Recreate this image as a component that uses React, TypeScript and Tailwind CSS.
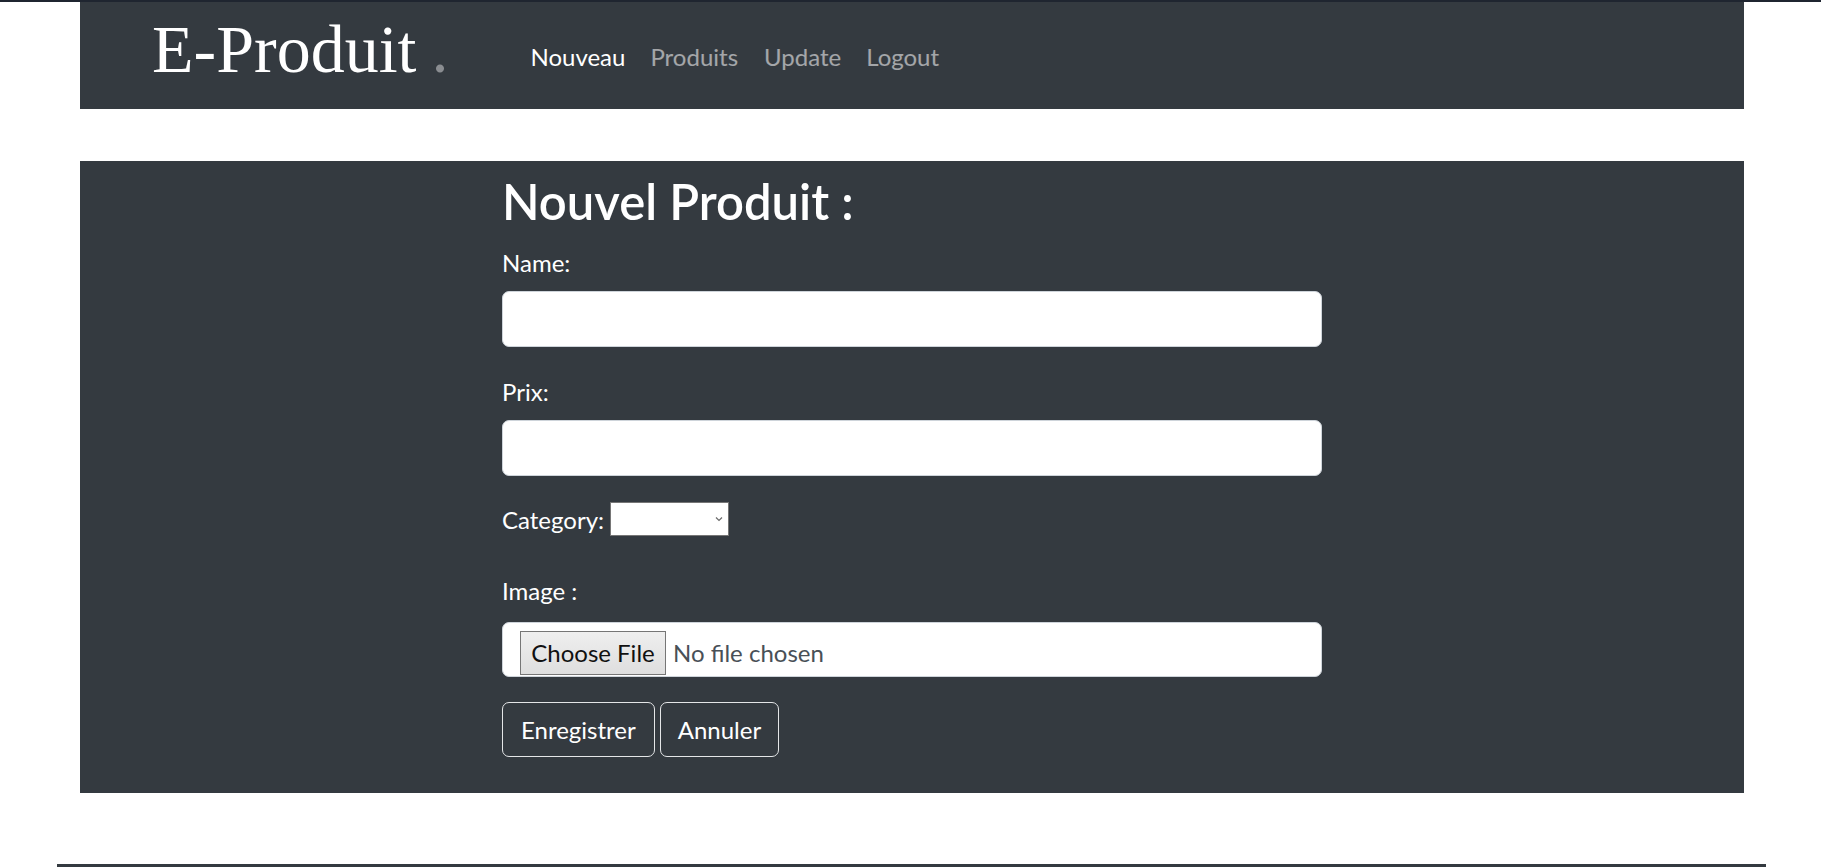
export default function App() {
  return (
    <div className="min-h-screen bg-white border-t-2 border-[#1f2530] font-['Lato',sans-serif]">
      <nav className="ml-[80px] w-[1664px] h-[107px] bg-[#343a40] flex items-start">
        <a href="#" className="ml-[72px] mt-[13px] font-['Liberation_Serif',serif] text-[68px] leading-none text-white whitespace-nowrap">
          E-Produit<span className="ml-[15px] text-[#8a8d91]">.</span>
        </a>
        <ul className="flex ml-[70px] mt-[37px] text-[24px] leading-[36px]">
          <li><a href="#" className="px-[12px] text-white">Nouveau</a></li>
          <li><a href="#" className="px-[13px] text-white/55">Produits</a></li>
          <li><a href="#" className="px-[13px] text-white/55">Update</a></li>
          <li><a href="#" className="px-[12px] text-white/55">Logout</a></li>
        </ul>
      </nav>

      <main className="ml-[80px] w-[1664px] mt-[52px] bg-[#343a40] pt-[10px] pb-[36px]">
        <form className="mx-auto w-[820px] text-white text-[24px] leading-[36px]">
          <h1 className="text-[49px] leading-[61px] font-semibold">Nouvel Produit :</h1>

          <label className="block mt-[13px]">Name:</label>
          <input type="text" className="mt-[10px] block w-full h-[56px] bg-white rounded-[7px] border border-[#ced4da] px-4 text-[#212529]" />

          <label className="block mt-[27px]">Prix:</label>
          <input type="text" className="mt-[10px] block w-full h-[56px] bg-white rounded-[7px] border border-[#ced4da] px-4 text-[#212529]" />

          <div className="mt-[26px] flex items-start gap-[6px]">
            <label>Category:</label>
            <div className="relative">
              <select className="appearance-none block w-[119px] h-[34px] bg-white border border-[#767676] text-[#212529] text-[16px]"></select>
              <svg className="absolute right-[6px] top-[14px] pointer-events-none" width="8" height="6" viewBox="0 0 8 6" fill="none">
                <path d="M1 1.5 L4 4.5 L7 1.5" stroke="#6b6b6b" strokeWidth="1.2" />
              </svg>
            </div>
          </div>

          <label className="block mt-[35px]">Image :</label>
          <div className="mt-[13px] h-[55px] bg-white rounded-[7px] border border-[#ced4da] flex items-start pl-[17px] pt-[8px]">
            <button type="button" className="h-[44px] w-[146px] border border-[#767676] bg-gradient-to-b from-[#efefef] to-[#dedede] text-[#111] leading-none">
              Choose File
            </button>
            <span className="ml-[7px] mt-[4px] text-[#495057]">No file chosen</span>
          </div>

          <div className="mt-[25px] flex gap-[5px]">
            <button type="submit" className="h-[55px] px-[18px] rounded-[7px] border border-[#e4e6e8] text-white">Enregistrer</button>
            <button type="button" className="h-[55px] px-[17px] rounded-[7px] border border-[#e4e6e8] text-white">Annuler</button>
          </div>
        </form>
      </main>

      <div className="mt-[71px] ml-[57px] w-[1709px] h-[3px] bg-[#343a40]"></div>
    </div>
  );
}
